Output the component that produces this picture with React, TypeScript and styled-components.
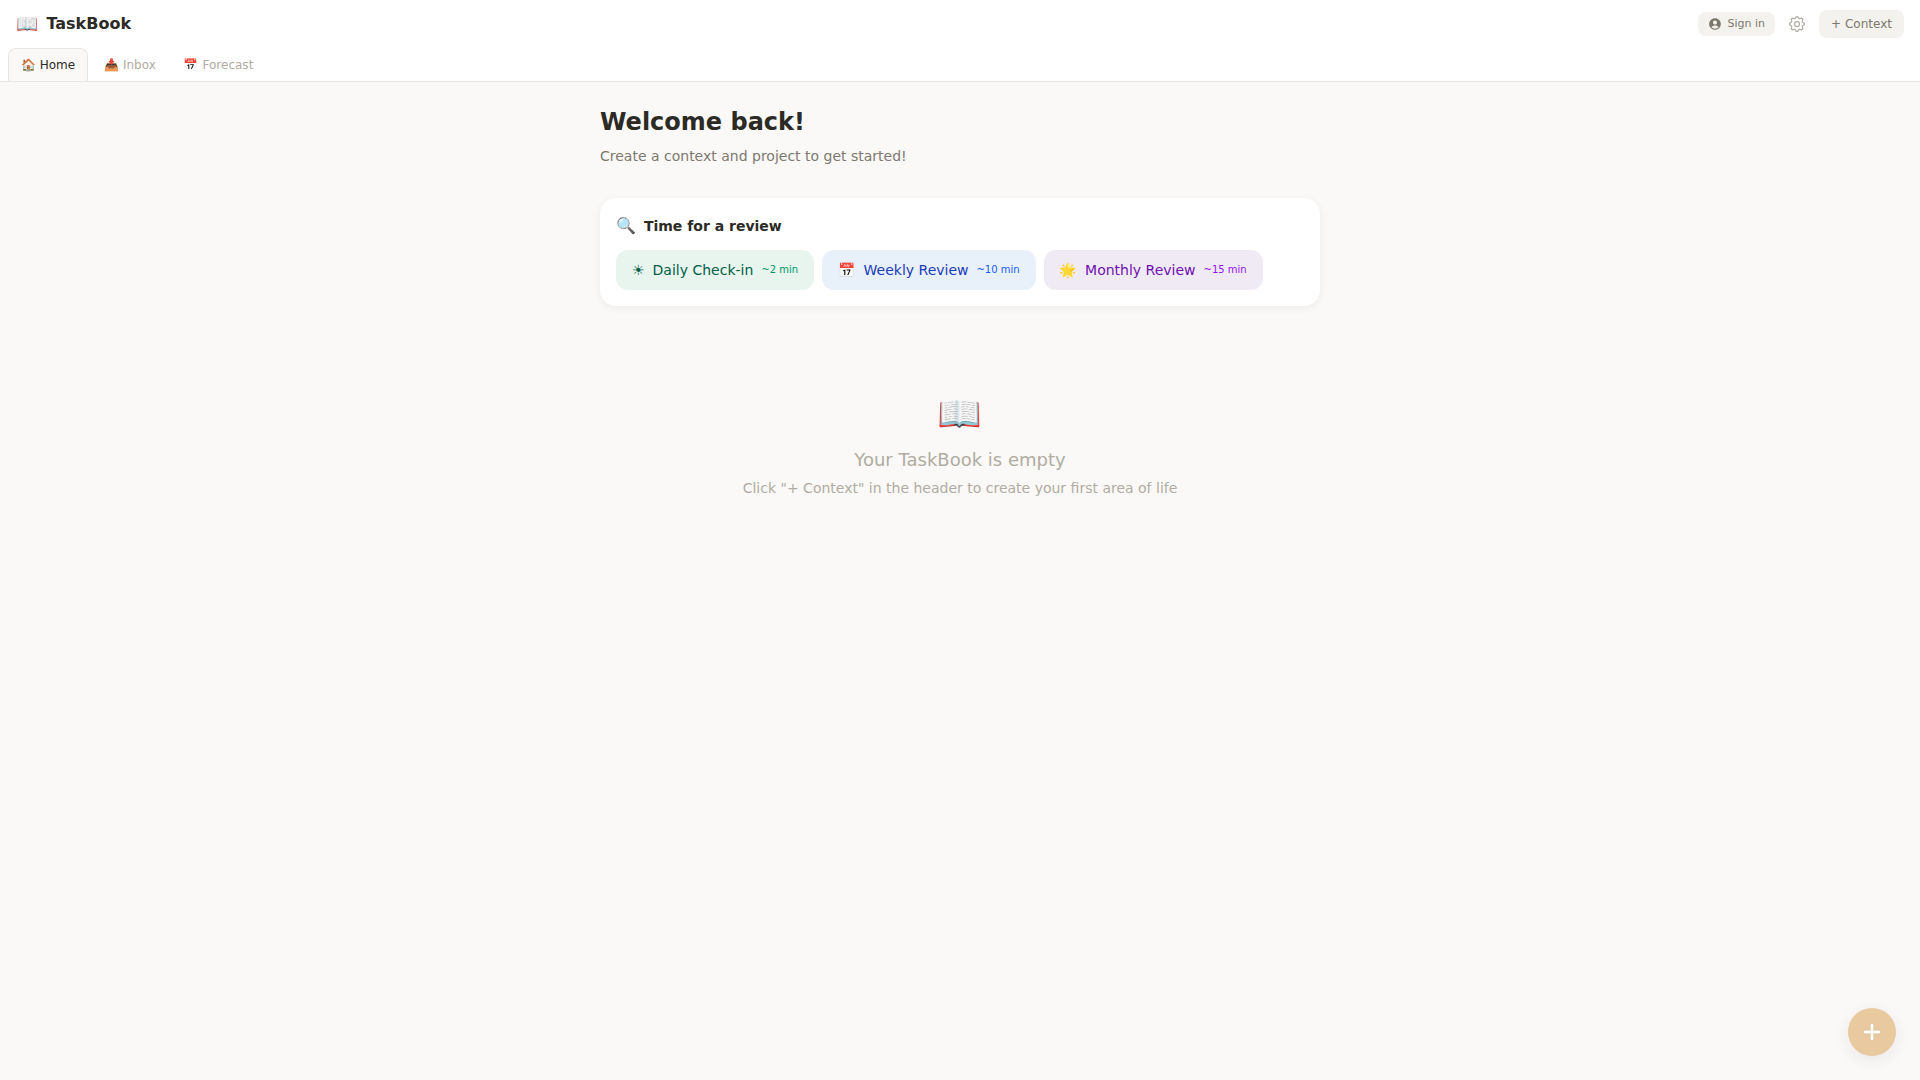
import React from "react";
import styled, { createGlobalStyle } from "styled-components";
import { MdAccountCircle } from "react-icons/md";

const GlobalStyle = createGlobalStyle`
  *, *::before, *::after { box-sizing: border-box; }
  body {
    margin: 0;
    background: #faf9f7;
    color: #2c2a25;
    font-family: "DejaVu Sans", "Noto Color Emoji", sans-serif;
    font-size: 14px;
    line-height: 20px;
  }
  button { font: inherit; border: 0; cursor: pointer; }
  h1, h2, p { margin: 0; }
`;

const Page = styled.div`
  min-height: 100vh;
  display: flex;
  flex-direction: column;
`;

const Header = styled.header`
  background: #ffffff;
  border-bottom: 1px solid #e8e6e1;
`;

const TopBar = styled.div`
  display: flex;
  align-items: center;
  justify-content: space-between;
  height: 48px;
  padding: 0 16px;
`;

const Brand = styled.div`
  display: flex;
  align-items: center;
  gap: 8px;
  font-size: 16px;
  line-height: 24px;
  font-weight: 700;
`;

const BrandIcon = styled.span`
  font-size: 18px;
  line-height: 28px;
  font-weight: 400;
`;

const Actions = styled.div`
  display: flex;
  align-items: center;
  gap: 8px;
`;

const SignInButton = styled.button`
  display: flex;
  align-items: center;
  gap: 6px;
  padding: 4px 10px;
  border-radius: 8px;
  background: #f3f2ee;
  color: #7d786f;
  font-size: 11px;
  line-height: 16px;
`;

const IconButton = styled.button`
  display: flex;
  padding: 4px;
  background: transparent;
  color: #b0aca2;
`;

const ContextButton = styled.button`
  padding: 6px 12px;
  border-radius: 8px;
  background: #f3f2ee;
  color: #7d786f;
  font-size: 12px;
  line-height: 16px;
`;

const Tabs = styled.nav`
  display: flex;
  gap: 4px;
  padding: 0 8px;
`;

const Tab = styled.button<{ $active?: boolean }>`
  padding: 8px 12px;
  border: ${(p) => (p.$active ? "1px solid #e8e6e1" : "0")};
  border-bottom: 0;
  border-radius: 8px 8px 0 0;
  background: ${(p) => (p.$active ? "#faf9f7" : "transparent")};
  color: ${(p) => (p.$active ? "#2c2a25" : "#b0aca2")};
  font-size: 12px;
  line-height: 16px;
`;

const Main = styled.main`
  width: 100%;
  max-width: 768px;
  margin: 0 auto;
  padding: 24px;
`;

const Title = styled.h1`
  font-size: 24px;
  line-height: 32px;
  font-weight: 700;
`;

const Subtitle = styled.p`
  margin-top: 8px;
  color: #7d786f;
`;

const ReviewCard = styled.section`
  margin-top: 32px;
  padding: 16px;
  border-radius: 16px;
  background: #ffffff;
  box-shadow: 0 2px 8px rgba(44, 42, 37, 0.06);
`;

const CardHeading = styled.div`
  display: flex;
  align-items: center;
  gap: 8px;
  margin-bottom: 12px;

  h2 {
    font-size: 14px;
    line-height: 20px;
    font-weight: 700;
  }
`;

const CardIcon = styled.span`
  font-size: 16px;
  line-height: 24px;
`;

const ReviewList = styled.div`
  display: flex;
  flex-wrap: wrap;
  gap: 8px;
`;

const ReviewButton = styled.button<{ $bg: string; $fg: string }>`
  display: flex;
  align-items: center;
  gap: 8px;
  padding: 10px 16px;
  border-radius: 12px;
  background: ${(p) => p.$bg};
  color: ${(p) => p.$fg};
`;

const Duration = styled.span<{ $color: string }>`
  color: ${(p) => p.$color};
  font-size: 10px;
  line-height: 16px;
`;

const Empty = styled.section`
  margin-top: 24px;
  padding: 64px 0;
  text-align: center;
  color: #b0aca2;
`;

const EmptyIcon = styled.div`
  margin-bottom: 12px;
  font-size: 36px;
  line-height: 40px;
`;

const EmptyTitle = styled.p`
  margin-bottom: 4px;
  font-size: 18px;
  line-height: 28px;
`;

const AddButton = styled.button`
  position: fixed;
  right: 24px;
  bottom: 24px;
  display: flex;
  align-items: center;
  justify-content: center;
  width: 48px;
  height: 48px;
  padding: 0;
  border-radius: 50%;
  background: #e8c9a0;
  color: #ffffff;
  box-shadow: 0 4px 16px rgba(44, 42, 37, 0.08);
`;

const reviews = [
  { icon: "☀", label: "Daily Check-in", time: "~2 min", bg: "#e8f4ee", fg: "#006045", accent: "#009966" },
  { icon: "📅", label: "Weekly Review", time: "~10 min", bg: "#e8f0fa", fg: "#193cb8", accent: "#155dfc" },
  { icon: "🌟", label: "Monthly Review", time: "~15 min", bg: "#f0eaf5", fg: "#6e11b0", accent: "#9810fa" },
];

const GearIcon = () => (
  <svg width="20" height="20" viewBox="0 0 24 24" fill="none" stroke="currentColor" strokeWidth="1.5" strokeLinecap="round" strokeLinejoin="round" aria-hidden="true">
    <path d="M10.325 4.317c.426-1.756 2.924-1.756 3.35 0a1.724 1.724 0 002.573 1.066c1.543-.94 3.31.826 2.37 2.37a1.724 1.724 0 001.065 2.572c1.756.426 1.756 2.924 0 3.35a1.724 1.724 0 00-1.066 2.573c.94 1.543-.826 3.31-2.37 2.37a1.724 1.724 0 00-2.572 1.065c-.426 1.756-2.924 1.756-3.35 0a1.724 1.724 0 00-2.573-1.066c-1.543.94-3.31-.826-2.37-2.37a1.724 1.724 0 00-1.065-2.572c-1.756-.426-1.756-2.924 0-3.35a1.724 1.724 0 001.066-2.573c-.94-1.543.826-3.31 2.37-2.37.996.608 2.296.07 2.572-1.065z" />
    <circle cx="12" cy="12" r="3" />
  </svg>
);

export default function App() {
  return (
    <Page>
      <GlobalStyle />
      <Header>
        <TopBar>
          <Brand>
            <BrandIcon>📖</BrandIcon>
            <span>TaskBook</span>
          </Brand>
          <Actions>
            <SignInButton type="button">
              <MdAccountCircle size={14} aria-hidden="true" />
              Sign in
            </SignInButton>
            <IconButton type="button" aria-label="Settings">
              <GearIcon />
            </IconButton>
            <ContextButton type="button">+ Context</ContextButton>
          </Actions>
        </TopBar>
        <Tabs>
          <Tab type="button" $active>🏠 Home</Tab>
          <Tab type="button">📥 Inbox</Tab>
          <Tab type="button">📅 Forecast</Tab>
        </Tabs>
      </Header>
      <Main>
        <Title>Welcome back!</Title>
        <Subtitle>Create a context and project to get started!</Subtitle>
        <ReviewCard>
          <CardHeading>
            <CardIcon>🔍</CardIcon>
            <h2>Time for a review</h2>
          </CardHeading>
          <ReviewList>
            {reviews.map((r) => (
              <ReviewButton key={r.label} type="button" $bg={r.bg} $fg={r.fg}>
                <span>{r.icon}</span>
                <span>{r.label}</span>
                <Duration $color={r.accent}>{r.time}</Duration>
              </ReviewButton>
            ))}
          </ReviewList>
        </ReviewCard>
        <Empty>
          <EmptyIcon>📖</EmptyIcon>
          <EmptyTitle>Your TaskBook is empty</EmptyTitle>
          <p>Click "+ Context" in the header to create your first area of life</p>
        </Empty>
      </Main>
      <AddButton type="button" aria-label="Add task">
        <svg width="24" height="24" viewBox="0 0 24 24" fill="none" stroke="currentColor" strokeWidth="2.5" strokeLinecap="round" aria-hidden="true">
          <path d="M12 5v14M5 12h14" />
        </svg>
      </AddButton>
    </Page>
  );
}
